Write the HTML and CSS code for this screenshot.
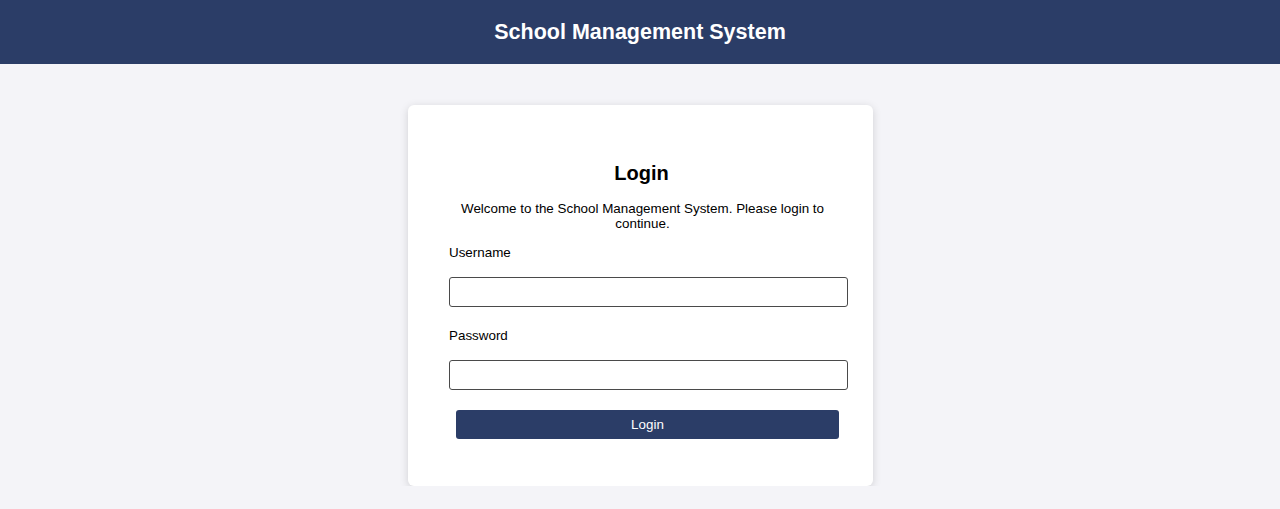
FILE: index.html
```html
<!DOCTYPE html>
<html lang="en">
<head>
<meta charset="utf-8">
<title>School Management System</title>
<link rel="stylesheet" href="styles.css">
</head>
<body>
<header class="topbar">
  <h1 class="topbar-title">School Management System</h1>
</header>
<main class="page">
  <section class="card">
    <h2 class="card-title">Login</h2>
    <p class="card-intro">Welcome to the School Management System. Please login to continue.</p>
    <form class="login-form">
      <label class="field-label" for="username">Username</label>
      <input class="field-input" id="username" type="text">
      <label class="field-label" for="password">Password</label>
      <input class="field-input" id="password" type="password">
      <button class="submit-btn" type="button">Login</button>
    </form>
  </section>
</main>
</body>
</html>
```

FILE: styles.css
```css
* { box-sizing: border-box; }

body {
  margin: 0;
  background: #f4f4f8;
  font-family: "Liberation Sans", Arial, sans-serif;
  color: #000;
}

.topbar {
  height: 64px;
  background: #2b3d67;
  display: flex;
  align-items: center;
  justify-content: center;
}

.topbar-title {
  margin: 0;
  color: #fff;
  font-size: 21.5px;
  font-weight: bold;
  line-height: 24px;
}

.page {
  display: flex;
  justify-content: center;
  padding: 41px 0 0 1px;
}

.card {
  width: 465px;
  background: #fff;
  border-radius: 6px;
  box-shadow: 0 2px 8px rgba(0, 0, 0, 0.15);
  padding: 40px 39px 47px 41px;
  text-align: center;
}

.card-title {
  font-size: 20px;
  margin: 16.6px 0;
  line-height: 23px;
}

.card-intro {
  font-size: 13.4px;
  line-height: 15px;
  margin: 13px -2px 14px 0;
}

.login-form {
  display: flex;
  flex-direction: column;
  align-items: flex-start;
  text-align: left;
}

.field-label {
  font-size: 13.4px;
  line-height: 15px;
  margin: 0 0 17px;
}

.field-input {
  width: calc(100% + 14px);
  height: 30px;
  margin: 0 0 21px;
  border: 1px solid #4a4a4a;
  border-radius: 3px;
  padding: 0 6px;
  font: inherit;
  background: #fff;
}

.field-input + .field-label + .field-input {
  margin-bottom: 20px;
}

.submit-btn {
  width: 383px;
  height: 29px;
  margin-left: 7px;
  background: #2b3d67;
  color: #fff;
  border: none;
  border-radius: 3px;
  font-family: inherit;
  font-size: 13.4px;
}
```
